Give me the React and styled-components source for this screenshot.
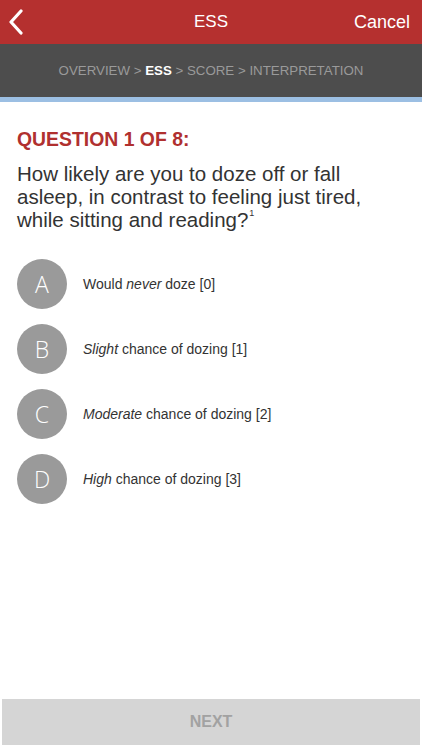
import React from "react";
import styled, { createGlobalStyle } from "styled-components";

const Global = createGlobalStyle`
  html, body { margin: 0; padding: 0; background: #fff; }
  body { font-family: "Liberation Sans", Arial, sans-serif; }
`;

const K = {
  Page: styled.div`
    width: 422px;
    height: 750px;
    display: flex;
    flex-direction: column;
    background: #fff;
  `,
  Header: styled.div`
    height: 44px;
    background: #b5302f;
    display: grid;
    grid-template-columns: 80px 1fr 80px;
    align-items: center;
    color: #fff;
  `,
  Back: styled.div`
    padding-left: 8px;
    display: flex;
    align-items: center;
  `,
  Title: styled.div`
    text-align: center;
    font-size: 17px;
  `,
  Cancel: styled.div`
    text-align: right;
    padding-right: 12px;
    font-size: 18px;
  `,
  Crumbs: styled.div`
    height: 53px;
    background: #4d4d4d;
    border-bottom: 5px solid #9cbfe3;
    display: flex;
    align-items: center;
    justify-content: center;
    font-size: 13.3px;
    color: #9a9a9a;
    b {
      color: #fff;
    }
  `,
  Body: styled.div`
    flex: 1;
    padding: 26px 17px 0;
  `,
  QNum: styled.div`
    color: #b0302f;
    font-size: 19.4px;
    font-weight: bold;
  `,
  QText: styled.div`
    margin-top: 11px;
    max-width: 350px;
    color: #333;
    font-size: 20.5px;
    line-height: 23px;
    sup {
      display: inline-block;
      margin-left: 1px;
      font-size: 9px;
      line-height: 0;
      position: relative;
      top: -3px;
    }
  `,
  Options: styled.div`
    margin-top: 28px;
    display: flex;
    flex-direction: column;
    gap: 15px;
  `,
  Option: styled.div`
    display: flex;
    align-items: center;
    gap: 16px;
    font-size: 14px;
    color: #333;
  `,
  Circle: styled.div`
    width: 50px;
    height: 50px;
    border-radius: 50%;
    background: #9a9a9a;
    color: #fff;
    display: flex;
    align-items: center;
    justify-content: center;
    font-family: "Open Sans", sans-serif;
    font-weight: 300;
    font-size: 23px;
  `,
  Footer: styled.div`
    padding: 0 2px 5px;
  `,
  Next: styled.div`
    height: 46px;
    background: #d5d5d5;
    color: #a2a2a2;
    font-weight: bold;
    font-size: 16px;
    display: flex;
    align-items: center;
    justify-content: center;
  `,
};

const options = [
  ["A", <>Would <i>never</i> doze [0]</>],
  ["B", <><i>Slight</i> chance of dozing [1]</>],
  ["C", <><i>Moderate</i> chance of dozing [2]</>],
  ["D", <><i>High</i> chance of dozing [3]</>],
];

const App = () => (
  <K.Page>
    <Global />
    <K.Header>
      <K.Back>
        <svg width="16" height="26" viewBox="0 0 16 26">
          <path d="M13 2 L3 13 L13 24" fill="none" stroke="#fff" strokeWidth="3.2" strokeLinecap="round" strokeLinejoin="round" />
        </svg>
      </K.Back>
      <K.Title>ESS</K.Title>
      <K.Cancel>Cancel</K.Cancel>
    </K.Header>
    <K.Crumbs>
      OVERVIEW &gt;&nbsp;<b>ESS</b>&nbsp;&gt; SCORE &gt; INTERPRETATION
    </K.Crumbs>
    <K.Body>
      <K.QNum>QUESTION 1 OF 8:</K.QNum>
      <K.QText>
        How likely are you to doze off or fall asleep, in contrast to feeling just tired, while sitting and reading?<sup>1</sup>
      </K.QText>
      <K.Options>
        {options.map(([l, t]) => (
          <K.Option key={l}>
            <K.Circle>{l}</K.Circle>
            <span>{t}</span>
          </K.Option>
        ))}
      </K.Options>
    </K.Body>
    <K.Footer>
      <K.Next>NEXT</K.Next>
    </K.Footer>
  </K.Page>
);

export default App;
